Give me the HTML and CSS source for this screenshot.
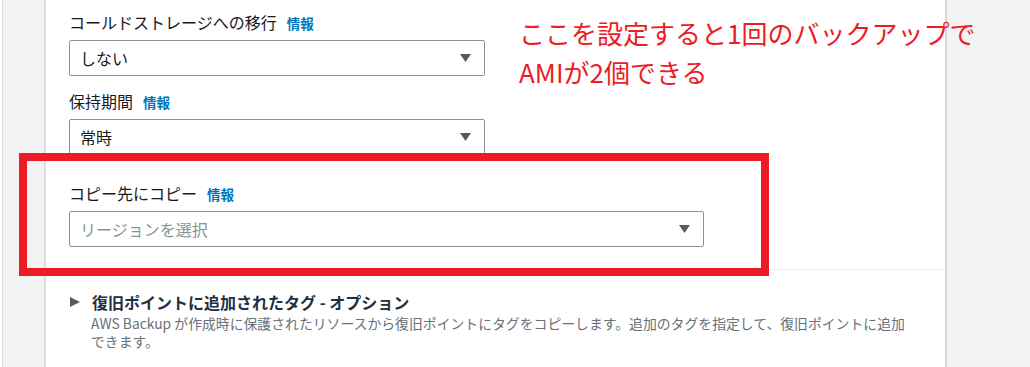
FILE: index.html
```html
<!DOCTYPE html>
<html lang="ja">
<head>
<meta charset="utf-8">
<title>バックアップルール</title>
<link rel="stylesheet" href="styles.css">
</head>
<body>
<div class="page">
  <div class="rail"></div>
  <main class="panel">
    <div class="fields">
      <div class="field">
        <div class="label">コールドストレージへの移行<a class="info">情報</a></div>
        <div class="select w-md"><span class="value">しない</span><svg class="caret" viewBox="0 0 11 8" width="11" height="8"><polygon points="0,0 11,0 5.5,8" /></svg></div>
      </div>
      <div class="field">
        <div class="label">保持期間<a class="info">情報</a></div>
        <div class="select w-md"><span class="value">常時</span><svg class="caret" viewBox="0 0 11 8" width="11" height="8"><polygon points="0,0 11,0 5.5,8" /></svg></div>
      </div>
      <div class="field field-copy">
        <div class="label">コピー先にコピー<a class="info">情報</a></div>
        <div class="select w-lg"><span class="value placeholder">リージョンを選択</span><svg class="caret" viewBox="0 0 11 8" width="11" height="8"><polygon points="0,0 11,0 5.5,8" /></svg></div>
      </div>
    </div>
    <div class="sep"></div>
    <div class="expander">
      <div class="exp-title"><svg class="exp-icon" viewBox="0 0 10 10" width="10" height="10"><polygon points="0,0 10,5 0,10" /></svg><span>復旧ポイントに追加されたタグ - オプション</span></div>
      <p class="exp-desc">AWS Backup が作成時に保護されたリソースから復旧ポイントにタグをコピーします。追加のタグを指定して、復旧ポイントに追加できます。</p>
    </div>
  </main>
  <div class="side"></div>
</div>
<div class="callout-box"></div>
<p class="callout-text">ここを設定すると1回のバックアップで<br>AMIが2個できる</p>
</body>
</html>
```

FILE: styles.css
```css
html, body {
  margin: 0;
  padding: 0;
  background: #ffffff;
  font-family: "Noto Sans CJK JP", "Noto Sans", sans-serif;
  color: #16191f;
}

.page {
  display: flex;
  height: 367px;
  overflow: hidden;
}

.rail {
  flex: 0 0 auto;
  width: 41px;
  margin-left: 2px;
  background: #f2f3f3;
  border-left: 1px solid #d5dbdb;
  border-right: 2px solid #dcdfe0;
}

.panel {
  flex: 0 0 899px;
  background: #ffffff;
}

.side {
  flex: 1 1 auto;
  background: #f2f3f3;
  border-left: 2px solid #d5d9da;
}

.fields {
  padding: 11px 0 0 23px;
}

.field + .field {
  margin-top: 14px;
}

.field-copy {
  margin-top: 27px !important;
}

.label {
  font-size: 16px;
  line-height: 22px;
  height: 22px;
  margin-bottom: 7px;
  color: #16191f;
  white-space: nowrap;
}

.info {
  margin-left: 10px;
  font-size: 13.5px;
  font-weight: 700;
  color: #0073bb;
}

.select {
  box-sizing: border-box;
  height: 36px;
  border: 1px solid #879596;
  border-radius: 2px;
  display: flex;
  align-items: center;
  justify-content: space-between;
  padding: 0 13px 0 10px;
}

.w-md { width: 416px; }
.w-lg { width: 635px; }

.value {
  font-size: 16px;
  line-height: 22px;
  color: #16191f;
}

.placeholder {
  color: #879596;
}

.caret {
  display: block;
  fill: #545b64;
}

.sep {
  height: 1px;
  background: #eaeded;
  margin-top: 22px;
}

.expander {
  padding: 21px 0 0 23px;
}

.exp-title {
  display: flex;
  align-items: center;
  font-size: 16px;
  line-height: 22px;
  font-weight: 700;
  color: #232f3e;
}

.exp-icon {
  display: block;
  margin: 0 12px 0 1px;
  fill: #545b64;
}

.exp-desc {
  margin: 1px 0 0 22px;
  width: 822px;
  font-size: 13.85px;
  line-height: 18px;
  color: #687078;
}

.callout-box {
  position: absolute;
  left: 19px;
  top: 153px;
  width: 750px;
  height: 123px;
  box-sizing: border-box;
  border: 8px solid #ed1c24;
}

.callout-text {
  position: absolute;
  left: 519px;
  top: 13px;
  margin: 0;
  font-size: 26px;
  line-height: 39px;
  color: #ed1c24;
  white-space: nowrap;
}
```
